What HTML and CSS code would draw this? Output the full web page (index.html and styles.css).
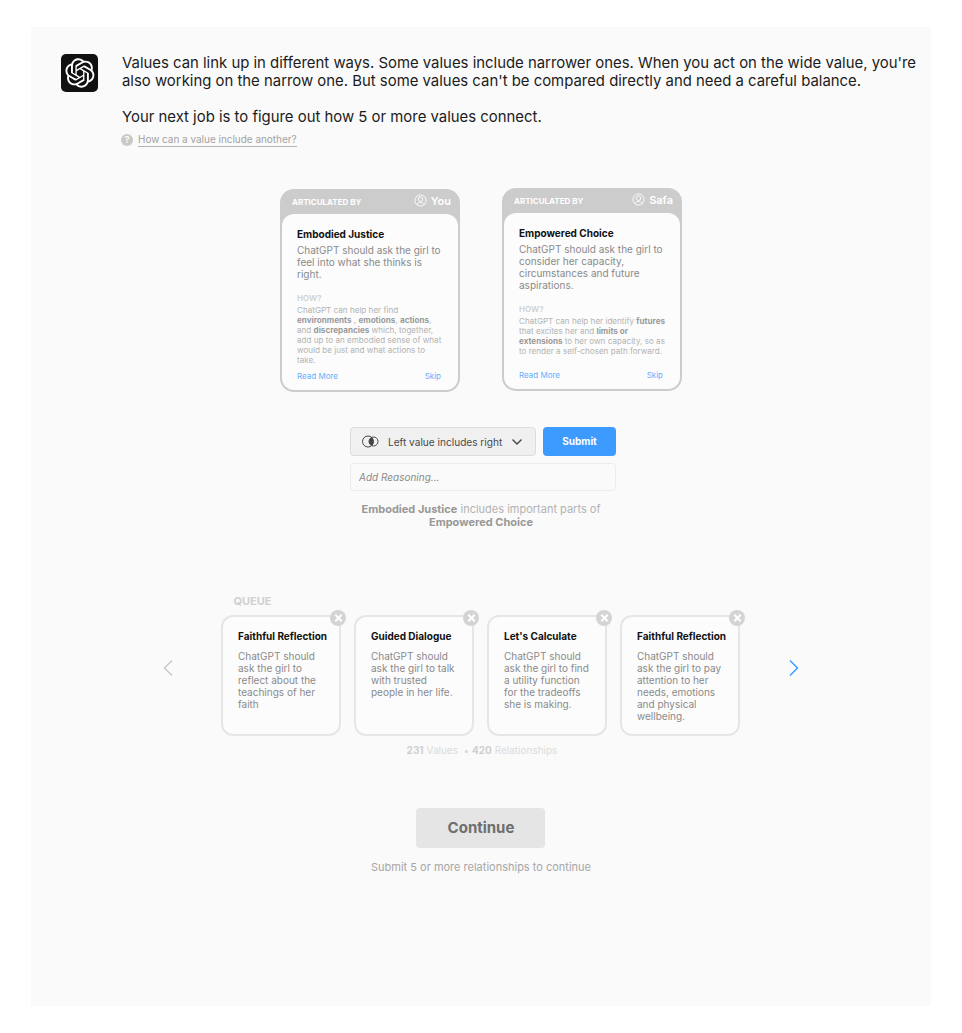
FILE: index.html
```html
<!DOCTYPE html>
<html lang="en">
<head>
	<meta charset="UTF-8">
	<title>Values</title>
	<link rel="stylesheet" href="styles.css">
</head>
<body>
	<div class="panel">
		<div class="intro">
			<div class="logo">
				<svg width="30" height="30" viewBox="0 0 41 41"><path fill="#fff" d="M37.5324 16.8707C37.9808 15.5241 38.1363 14.0974 37.9886 12.6859C37.8409 11.2744 37.3934 9.91076 36.676 8.68622C35.6126 6.83404 33.9882 5.3676 32.0373 4.4985C30.0864 3.62941 27.9098 3.40259 25.8215 3.85078C24.8796 2.7893 23.7219 1.94125 22.4257 1.36341C21.1295 0.785575 19.7249 0.491269 18.3058 0.500197C16.1708 0.495044 14.0893 1.16803 12.3614 2.42214C10.6335 3.67624 9.34853 5.44666 8.6917 7.47815C7.30085 7.76286 5.98686 8.3414 4.8377 9.17505C3.68854 10.0087 2.73073 11.0782 2.02839 12.312C0.956464 14.1591 0.498905 16.2988 0.721698 18.4228C0.944492 20.5467 1.83612 22.5449 3.268 24.1293C2.81966 25.4759 2.66413 26.9026 2.81182 28.3141C2.95951 29.7256 3.40701 31.0892 4.12437 32.3138C5.18791 34.1659 6.8123 35.6322 8.76321 36.5013C10.7141 37.3704 12.8907 37.5973 14.9789 37.1492C15.9208 38.2107 17.0786 39.0587 18.3747 39.6366C19.6709 40.2144 21.0755 40.5087 22.4946 40.4998C24.6307 40.5054 26.7133 39.8321 28.4418 38.5772C30.1704 37.3223 31.4556 35.5506 32.1119 33.5179C33.5027 33.2332 34.8167 32.6547 35.9659 31.821C37.115 30.9874 38.0728 29.9178 38.7752 28.684C39.8458 26.8371 40.3023 24.6979 40.0789 22.5748C39.8556 20.4517 38.9639 18.4544 37.5324 16.8707ZM22.4978 37.8849C20.7443 37.8874 19.0459 37.2733 17.6994 36.1501C17.7601 36.117 17.8666 36.0586 17.936 36.0161L25.9004 31.4156C26.1003 31.3019 26.2663 31.137 26.3813 30.9378C26.4964 30.7386 26.5563 30.5124 26.5549 30.2825V19.0542L29.9213 20.998C29.9389 21.0068 29.9541 21.0198 29.9656 21.0359C29.977 21.052 29.9842 21.0707 29.9867 21.0902V30.3889C29.9842 32.375 29.1946 34.2791 27.7909 35.6841C26.3872 37.0892 24.4838 37.8806 22.4978 37.8849ZM6.39227 31.0064C5.51397 29.4888 5.19742 27.7107 5.49804 25.9832C5.55718 26.0187 5.66048 26.0818 5.73461 26.1244L13.699 30.7248C13.8975 30.8408 14.1233 30.902 14.3532 30.902C14.583 30.902 14.8088 30.8408 15.0073 30.7248L24.731 25.1103V28.9979C24.7321 29.0177 24.7283 29.0376 24.7199 29.0556C24.7115 29.0736 24.6988 29.0893 24.6829 29.1012L16.6317 33.7497C14.9096 34.7416 12.8643 35.0097 10.9447 34.4954C9.02506 33.9811 7.38785 32.7263 6.39227 31.0064ZM4.29707 13.6194C5.17156 12.0998 6.55279 10.9364 8.19885 10.3327C8.19885 10.4013 8.19491 10.5228 8.19491 10.6071V19.808C8.19351 20.0378 8.25334 20.2638 8.36823 20.4629C8.48312 20.6619 8.64893 20.8267 8.84863 20.9404L18.5723 26.5542L15.206 28.4979C15.1894 28.5089 15.1703 28.5155 15.1505 28.5173C15.1307 28.5191 15.1107 28.516 15.0924 28.5082L7.04046 23.8557C5.32135 22.8601 4.06716 21.2235 3.55289 19.3046C3.03862 17.3858 3.30624 15.3413 4.29707 13.6194ZM31.955 20.0556L22.2312 14.4411L25.5976 12.4981C25.6142 12.4872 25.6333 12.4805 25.6531 12.4787C25.6729 12.4769 25.6928 12.4801 25.7111 12.4879L33.7631 17.1364C34.9967 17.849 36.0017 18.8982 36.6606 20.1613C37.3194 21.4244 37.6047 22.849 37.4832 24.2684C37.3617 25.6878 36.8382 27.0432 35.9743 28.1759C35.1103 29.3086 33.9415 30.1717 32.6047 30.6641C32.6047 30.5947 32.6047 30.4733 32.6047 30.3889V21.188C32.6066 20.9586 32.5474 20.7328 32.4332 20.5338C32.319 20.3348 32.154 20.1698 31.955 20.0556ZM35.3055 15.0128C35.2464 14.9765 35.1431 14.9142 35.069 14.8717L27.1045 10.2712C26.906 10.1554 26.6803 10.0943 26.4504 10.0943C26.2206 10.0943 25.9948 10.1554 25.7963 10.2712L16.0726 15.8858V11.9982C16.0715 11.9783 16.0753 11.9585 16.0837 11.9405C16.0921 11.9225 16.1048 11.9068 16.1207 11.8949L24.1719 7.25025C25.4053 6.53903 26.8158 6.19376 28.2383 6.25482C29.6608 6.31589 31.0364 6.78077 32.2044 7.59508C33.3723 8.40939 34.2842 9.53945 34.8334 10.8531C35.3826 12.1667 35.5464 13.6095 35.3055 15.0128ZM14.2424 21.9419L10.8752 19.9981C10.8576 19.9893 10.8423 19.9763 10.8309 19.9602C10.8195 19.9441 10.8122 19.9254 10.8098 19.9058V10.6071C10.8107 9.18295 11.2173 7.78848 11.9819 6.58696C12.7466 5.38544 13.8377 4.42659 15.1275 3.82264C16.4173 3.21869 17.8524 2.99464 19.2649 3.1767C20.6775 3.35876 22.0089 3.93941 23.1034 4.85067C23.0427 4.88379 22.937 4.94215 22.8668 4.98473L14.9024 9.58517C14.7025 9.69878 14.5366 9.86356 14.4215 10.0626C14.3065 10.2616 14.2466 10.4877 14.2479 10.7175L14.2424 21.9419ZM16.071 17.9991L20.4018 15.4978L24.7325 17.9975V22.9985L20.4018 25.4983L16.071 22.9985V17.9991Z"/></svg>
			</div>
			<div class="intro-text">
				<p>Values can link up in different ways. Some values include narrower ones. When you act on the wide value, you're also working on the narrow one. But some values can't be compared directly and need a careful balance.</p>
				<p class="next-job">Your next job is to figure out how 5 or more values connect.</p>
				<div class="help">
					<span class="help-icon">?</span>
					<span class="help-link">How can a value include another?</span>
				</div>
			</div>
		</div>

		<div class="compare">
			<div class="value-card first">
				<div class="card-head">
					<span class="head-label">ARTICULATED BY</span>
					<span class="head-who">
						<svg class="user-icon" viewBox="0 0 14 14"><circle cx="7" cy="7" r="6"/><circle cx="7" cy="5.600" r="2.400"/><path d="M3 11.400c.8-1.500 2.200-2.300 4-2.300s3.200.8 4 2.300"/></svg>
						You
					</span>
				</div>
				<div class="card-body">
					<h3>Embodied Justice</h3>
					<p class="should">ChatGPT should ask the girl to feel into what she thinks is right.</p>
					<h4>HOW?</h4>
					<p class="how">ChatGPT can help her find <b>environments</b> , <b>emotions</b>, <b>actions</b>, and <b>discrepancies</b> which, together, add up to an embodied sense of what would be just and what actions to take.</p>
					<div class="card-links"><span>Read More</span><span>Skip</span></div>
				</div>
			</div>
			<div class="value-card">
				<div class="card-head">
					<span class="head-label">ARTICULATED BY</span>
					<span class="head-who">
						<svg class="user-icon" viewBox="0 0 14 14"><circle cx="7" cy="7" r="6"/><circle cx="7" cy="5.600" r="2.400"/><path d="M3 11.400c.8-1.500 2.200-2.300 4-2.300s3.200.8 4 2.300"/></svg>
						Safa
					</span>
				</div>
				<div class="card-body">
					<h3>Empowered Choice</h3>
					<p class="should">ChatGPT should ask the girl to consider her capacity, circumstances and future aspirations.</p>
					<h4>HOW?</h4>
					<p class="how">ChatGPT can help her identify <b>futures</b> that excites her and <b>limits or extensions</b> to her own capacity, so as to render a self-chosen path forward.</p>
					<div class="card-links"><span>Read More</span><span>Skip</span></div>
				</div>
			</div>
		</div>

		<div class="form">
			<div class="form-row">
				<div class="select">
					<svg class="select-icon" width="17" height="13" viewBox="0 0 17 13"><circle cx="6" cy="6.500" r="5.500" class="ring"/><circle cx="11.500" cy="6.500" r="4.500" class="ring"/><path d="M9.660 2.400A5.500 5.500 0 0 1 9.660 10.600A4.500 4.500 0 0 1 9.660 2.400Z" class="fill"/></svg>
					<span class="select-text">Left value includes right</span>
					<svg class="select-icon" width="12" height="8" viewBox="0 0 12 8"><path d="M1.500 1.500 6 6l4.500-4.500" class="chev"/></svg>
				</div>
				<div class="submit">Submit</div>
			</div>
			<div class="reason">Add Reasoning...</div>
		</div>
		<p class="summary"><b>Embodied Justice</b> includes important parts of<br><b>Empowered Choice</b></p>

		<div class="queue-title-row"><span class="queue-title">QUEUE</span></div>
		<div class="queue-row">
			<svg class="arrow" width="12" height="18" viewBox="0 0 12 18"><path d="M10 1.500 2.500 9l7.500 7.500" stroke="#c9c9c9"/></svg>
			<div class="queue">
				<div class="queue-card">
					<span class="close"></span>
					<h3>Faithful Reflection</h3>
					<p>ChatGPT should ask the girl to reflect about the teachings of her faith</p>
				</div>
				<div class="queue-card">
					<span class="close"></span>
					<h3>Guided Dialogue</h3>
					<p>ChatGPT should ask the girl to talk with trusted people in her life.</p>
				</div>
				<div class="queue-card">
					<span class="close"></span>
					<h3>Let's Calculate</h3>
					<p>ChatGPT should ask the girl to find a utility function for the tradeoffs she is making.</p>
				</div>
				<div class="queue-card">
					<span class="close"></span>
					<h3>Faithful Reflection</h3>
					<p>ChatGPT should ask the girl to pay attention to her needs, emotions and physical wellbeing.</p>
				</div>
			</div>
			<svg class="arrow next" width="12" height="18" viewBox="0 0 12 18"><path d="M2 1.500 9.500 9 2 16.500" stroke="#3d9bff"/></svg>
		</div>
		<p class="stats"><b>231</b> Values &nbsp;• <b>420</b> Relationships</p>

		<div class="continue">Continue</div>
		<p class="continue-note">Submit 5 or more relationships to continue</p>
	</div>
</body>
</html>
```

FILE: styles.css
```css
*{margin: 0;padding: 0;box-sizing: border-box;}
body{
	background: #fff;
	font-family: Inter, "Liberation Sans", sans-serif;
	padding: 27px 31px;
}
.panel{
	width: 900px;
	height: 979px;
	background: #fafafa;
	display: flex;
	flex-direction: column;
	align-items: center;
}

/* top message */
.intro{display: flex;align-self: stretch;padding: 27px 0 0 30px;}
.logo{width: 37px;height: 38px;background: #111;border-radius: 5px;display: flex;align-items: center;justify-content: center;flex: none;}
.intro-text{margin-left: 24px;width: 800px;font-size: 14.900px;line-height: 18px;color: #1c1c1c;}
.next-job{margin-top: 18px;}
.help{display: flex;align-items: center;gap: 5px;margin-top: 6px;height: 16px;}
.help-icon{width: 12px;height: 12px;margin-left: -1px;border-radius: 50%;background: #c9c9c9;color: #fafafa;font-size: 9px;font-weight: 700;line-height: 12px;text-align: center;}
.help-link{font-size: 9.950px;line-height: 13px;color: #a3a3a3;border-bottom: 1px solid #b5b5b5;}

/* the two values */
.compare{display: flex;gap: 42px;margin-top: 40px;align-items: flex-start;}
.value-card{width: 180px;height: 203px;background: #ccc;border-radius: 14px;padding: 0 2px 2px;display: flex;flex-direction: column;}
.value-card.first{margin-top: 1px;}
.card-head{height: 25px;display: flex;justify-content: space-between;align-items: center;padding: 0 7px 2px 10px;color: #fff;flex: none;}
.head-label{font-size: 8px;font-weight: 700;margin-top: 2px;}
.head-who{display: flex;align-items: center;gap: 4px;font-size: 11px;font-weight: 600;}
.user-icon{width: 13px;height: 13px;fill: none;stroke: #fff;stroke-width: 1;}
.card-body{flex: 1;background: #fcfcfc;border-radius: 12px;padding: 14px 14px 0 15px;position: relative;}
.card-body h3{font-size: 10px;line-height: 13px;font-weight: 700;color: #111;}
.should{font-size: 10px;line-height: 12px;color: #8a8a8a;margin-top: 3px;}
.card-body h4{font-size: 8px;line-height: 10px;font-weight: 600;color: #d0d0d0;margin-top: 13px;}
.how{font-size: 8.100px;line-height: 10px;color: #b3b3b3;margin-top: 2px;}
.how b{color: #9a9a9a;font-weight: 700;}
.card-links{position: absolute;left: 15px;right: 17px;bottom: 9px;display: flex;justify-content: space-between;font-size: 8px;line-height: 10px;color: #67aefc;}

/* relation form */
.form{width: 266px;margin: 35px 0 0 4px;}
.form-row{display: flex;gap: 7px;}
.select{width: 186px;height: 29px;background: #f0f0f0;border: 1px solid #dcdcdc;border-radius: 4px;display: flex;align-items: center;padding: 0 11px;font-size: 10.100px;color: #4a4a4a;}
.select-icon{flex: none;}
.select-text{margin-left: 9px;margin-right: 9px;white-space: nowrap;}
.ring{fill: none;stroke: #444;stroke-width: 1;}
.fill{fill: #444;}
.chev{fill: none;stroke: #444;stroke-width: 1.400;}
.submit{width: 73px;height: 29px;background: #3d9bff;border-radius: 4px;color: #fff;font-size: 10px;font-weight: 700;line-height: 29px;text-align: center;}
.reason{height: 28px;margin-top: 7px;border: 1px solid #ececec;border-radius: 4px;font-size: 10px;font-style: italic;line-height: 27px;padding-left: 8px;color: #8a8a8a;}
.summary{margin-top: 12px;font-size: 11px;line-height: 13px;text-align: center;color: #b3b3b3;white-space: nowrap;}
.summary b{color: #989898;font-weight: 700;}

/* queue */
.queue-title-row{width: 519px;margin-top: 65px;padding-left: 12px;}
.queue-title{font-size: 11px;line-height: 14px;font-weight: 700;color: #d0d0d0;display: block;}
.queue-row{display: flex;align-items: flex-start;gap: 47px;margin-top: 7px;}
.arrow{fill: none;stroke-width: 1.500;flex: none;margin-top: 44px;}
.arrow.next{margin-left: 1px;}
.queue{display: flex;gap: 13px;}
.queue-card{width: 120px;height: 121px;background: #fcfcfc;border: 2px solid #e6e6e6;border-radius: 12px;padding: 13px 15px 0;position: relative;}
.queue-card h3{font-size: 10px;line-height: 13px;font-weight: 700;color: #111;white-space: nowrap;}
.queue-card p{font-size: 10px;line-height: 12px;color: #8a8a8a;margin-top: 7px;}
.close{position: absolute;top: -7px;right: -7px;width: 16px;height: 16px;border-radius: 50%;background: #d4d4d4;}
.close::before,.close::after{content: "";position: absolute;left: 3.500px;top: 7px;width: 9px;height: 2px;background: #fff;transform: rotate(45deg);}
.close::after{transform: rotate(-45deg);}
.stats{margin: 8px 0 0 2px;font-size: 10px;line-height: 13px;color: #dadada;}
.stats b{color: #cfcfcf;font-weight: 700;}

/* continue */
.continue{width: 129px;height: 40px;margin: 51px 2px 0 0;padding-left: 2px;background: #e5e5e5;border-radius: 4px;color: #6e6e6e;font-size: 15px;font-weight: 700;line-height: 40px;text-align: center;}
.continue-note{margin-top: 12px;font-size: 11px;line-height: 14px;color: #a6a6a6;}
```
